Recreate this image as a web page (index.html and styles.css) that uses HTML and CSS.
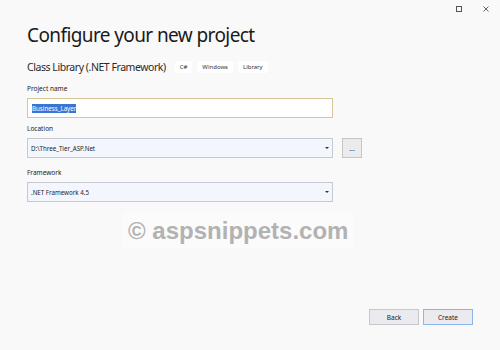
FILE: index.html
```html
<!DOCTYPE html>
<html>
<head>
<meta charset="utf-8">
<link rel="stylesheet" href="styles.css">
</head>
<body>
<div class="window">
  <div class="titlebar">
    <svg class="ctl" width="8" height="8" viewBox="0 0 8 8"><rect x="1.5" y="1.5" width="5" height="5" fill="none" stroke="#555" stroke-width="1"/></svg>
    <svg class="ctl close" width="8" height="8" viewBox="0 0 8 8"><path d="M1.5 1.5L6.5 6.5M6.5 1.5L1.5 6.5" stroke="#555" stroke-width="0.9"/></svg>
  </div>
  <div class="content">
    <h1 class="title">Configure your new project</h1>
    <div class="subtitle-row">
      <span class="subtitle">Class Library (.NET Framework)</span>
      <span class="tag">C#</span>
      <span class="tag">Windows</span>
      <span class="tag">Library</span>
    </div>
    <div class="field f-name">
      <label class="label">Project name</label>
      <div class="input focused"><span class="sel">Business_Layer</span></div>
    </div>
    <div class="field f-loc">
      <label class="label">Location</label>
      <div class="row">
        <div class="combo"><span>D:\Three_Tier_ASP.Net</span><span class="arrow"></span></div>
        <div class="browse">...</div>
      </div>
    </div>
    <div class="field f-fw">
      <label class="label">Framework</label>
      <div class="combo"><span>.NET Framework 4.5</span><span class="arrow"></span></div>
    </div>
  </div>
  <div class="footer">
    <div class="btn">Back</div>
    <div class="btn primary">Create</div>
  </div>
  <div class="watermark">© aspsnippets.com</div>
</div>
</body>
</html>
```
FILE: styles.css
```css
* { box-sizing: border-box; }
html, body { margin: 0; padding: 0; }
body {
  background: #f9f9f9;
  font-family: "Noto Sans", "Open Sans", sans-serif;
  color: #1e1e1e;
}
.window {
  position: relative;
  width: 500px;
  height: 350px;
  display: flex;
  flex-direction: column;
}
.titlebar {
  height: 18px;
  display: flex;
  justify-content: flex-end;
  align-items: flex-start;
  padding-top: 5px;
  padding-right: 10px;
  gap: 19px;
}
.ctl { display: block; }
.content {
  padding-left: 27px;
  display: flex;
  flex-direction: column;
}
.title {
  margin: 4px 0 0 0;
  font-weight: 400;
  font-size: 19px;
  line-height: 26px;
  letter-spacing: -0.6px;
  color: #1a1a1a;
}
.subtitle-row {
  display: flex;
  align-items: center;
  margin-top: 12px;
  height: 14px;
}
.subtitle {
  font-size: 10.5px;
  color: #2a2a2a;
  letter-spacing: -0.45px;
  margin-right: 9px;
}
.tag {
  background: #ffffff;
  border-radius: 3px;
  font-size: 6px;
  color: #333;
  height: 12px;
  line-height: 12px;
  padding: 0 5px;
  margin-right: 5px;
}
.field {
  display: flex;
  flex-direction: column;
}
.f-name { margin-top: 11px; }
.f-loc { margin-top: 7px; }
.f-fw { margin-top: 11px; }
.label {
  font-size: 6.5px;
  line-height: 8px;
  color: #222;
  margin-bottom: 5px;
}
.input, .combo {
  width: 306px;
  height: 20px;
  display: flex;
  align-items: center;
  font-size: 6.2px;
  color: #1e1e1e;
}
.input {
  border: 1px solid #d7c59a;
  background: #ffffff;
  padding-left: 4px;
}
.sel {
  background: #3a75d6;
  color: #fff;
  line-height: 9px;
}
.combo {
  border: 1px solid #c6c9d2;
  background: #f3f6fd;
  padding-left: 3px;
  justify-content: space-between;
}
.arrow {
  width: 0;
  height: 0;
  border-left: 2px solid transparent;
  border-right: 2px solid transparent;
  border-top: 2px solid #333;
  margin-right: 3px;
}
.row {
  display: flex;
  gap: 9px;
}
.browse {
  width: 20px;
  height: 20px;
  border: 1px solid #c5c5c5;
  background: #ebebeb;
  font-size: 7px;
  display: flex;
  align-items: center;
  justify-content: center;
  color: #333;
}
.footer {
  margin-top: auto;
  margin-bottom: 25px;
  display: flex;
  justify-content: flex-end;
  gap: 4px;
  padding-right: 27px;
}
.btn {
  width: 50px;
  height: 16px;
  border: 1px solid #c8c8c8;
  background: #ebebef;
  font-size: 6.5px;
  display: flex;
  align-items: center;
  justify-content: center;
  color: #222;
}
.btn.primary {
  border-color: #8ab8ee;
}
.watermark {
  position: absolute;
  left: 123px;
  top: 213px;
  padding: 4px 5px;
  background: #fbfbfb;
  font-family: "Liberation Sans", Arial, sans-serif;
  font-weight: 700;
  font-size: 24px;
  line-height: 28px;
  color: #b2b2b2;
}
```
